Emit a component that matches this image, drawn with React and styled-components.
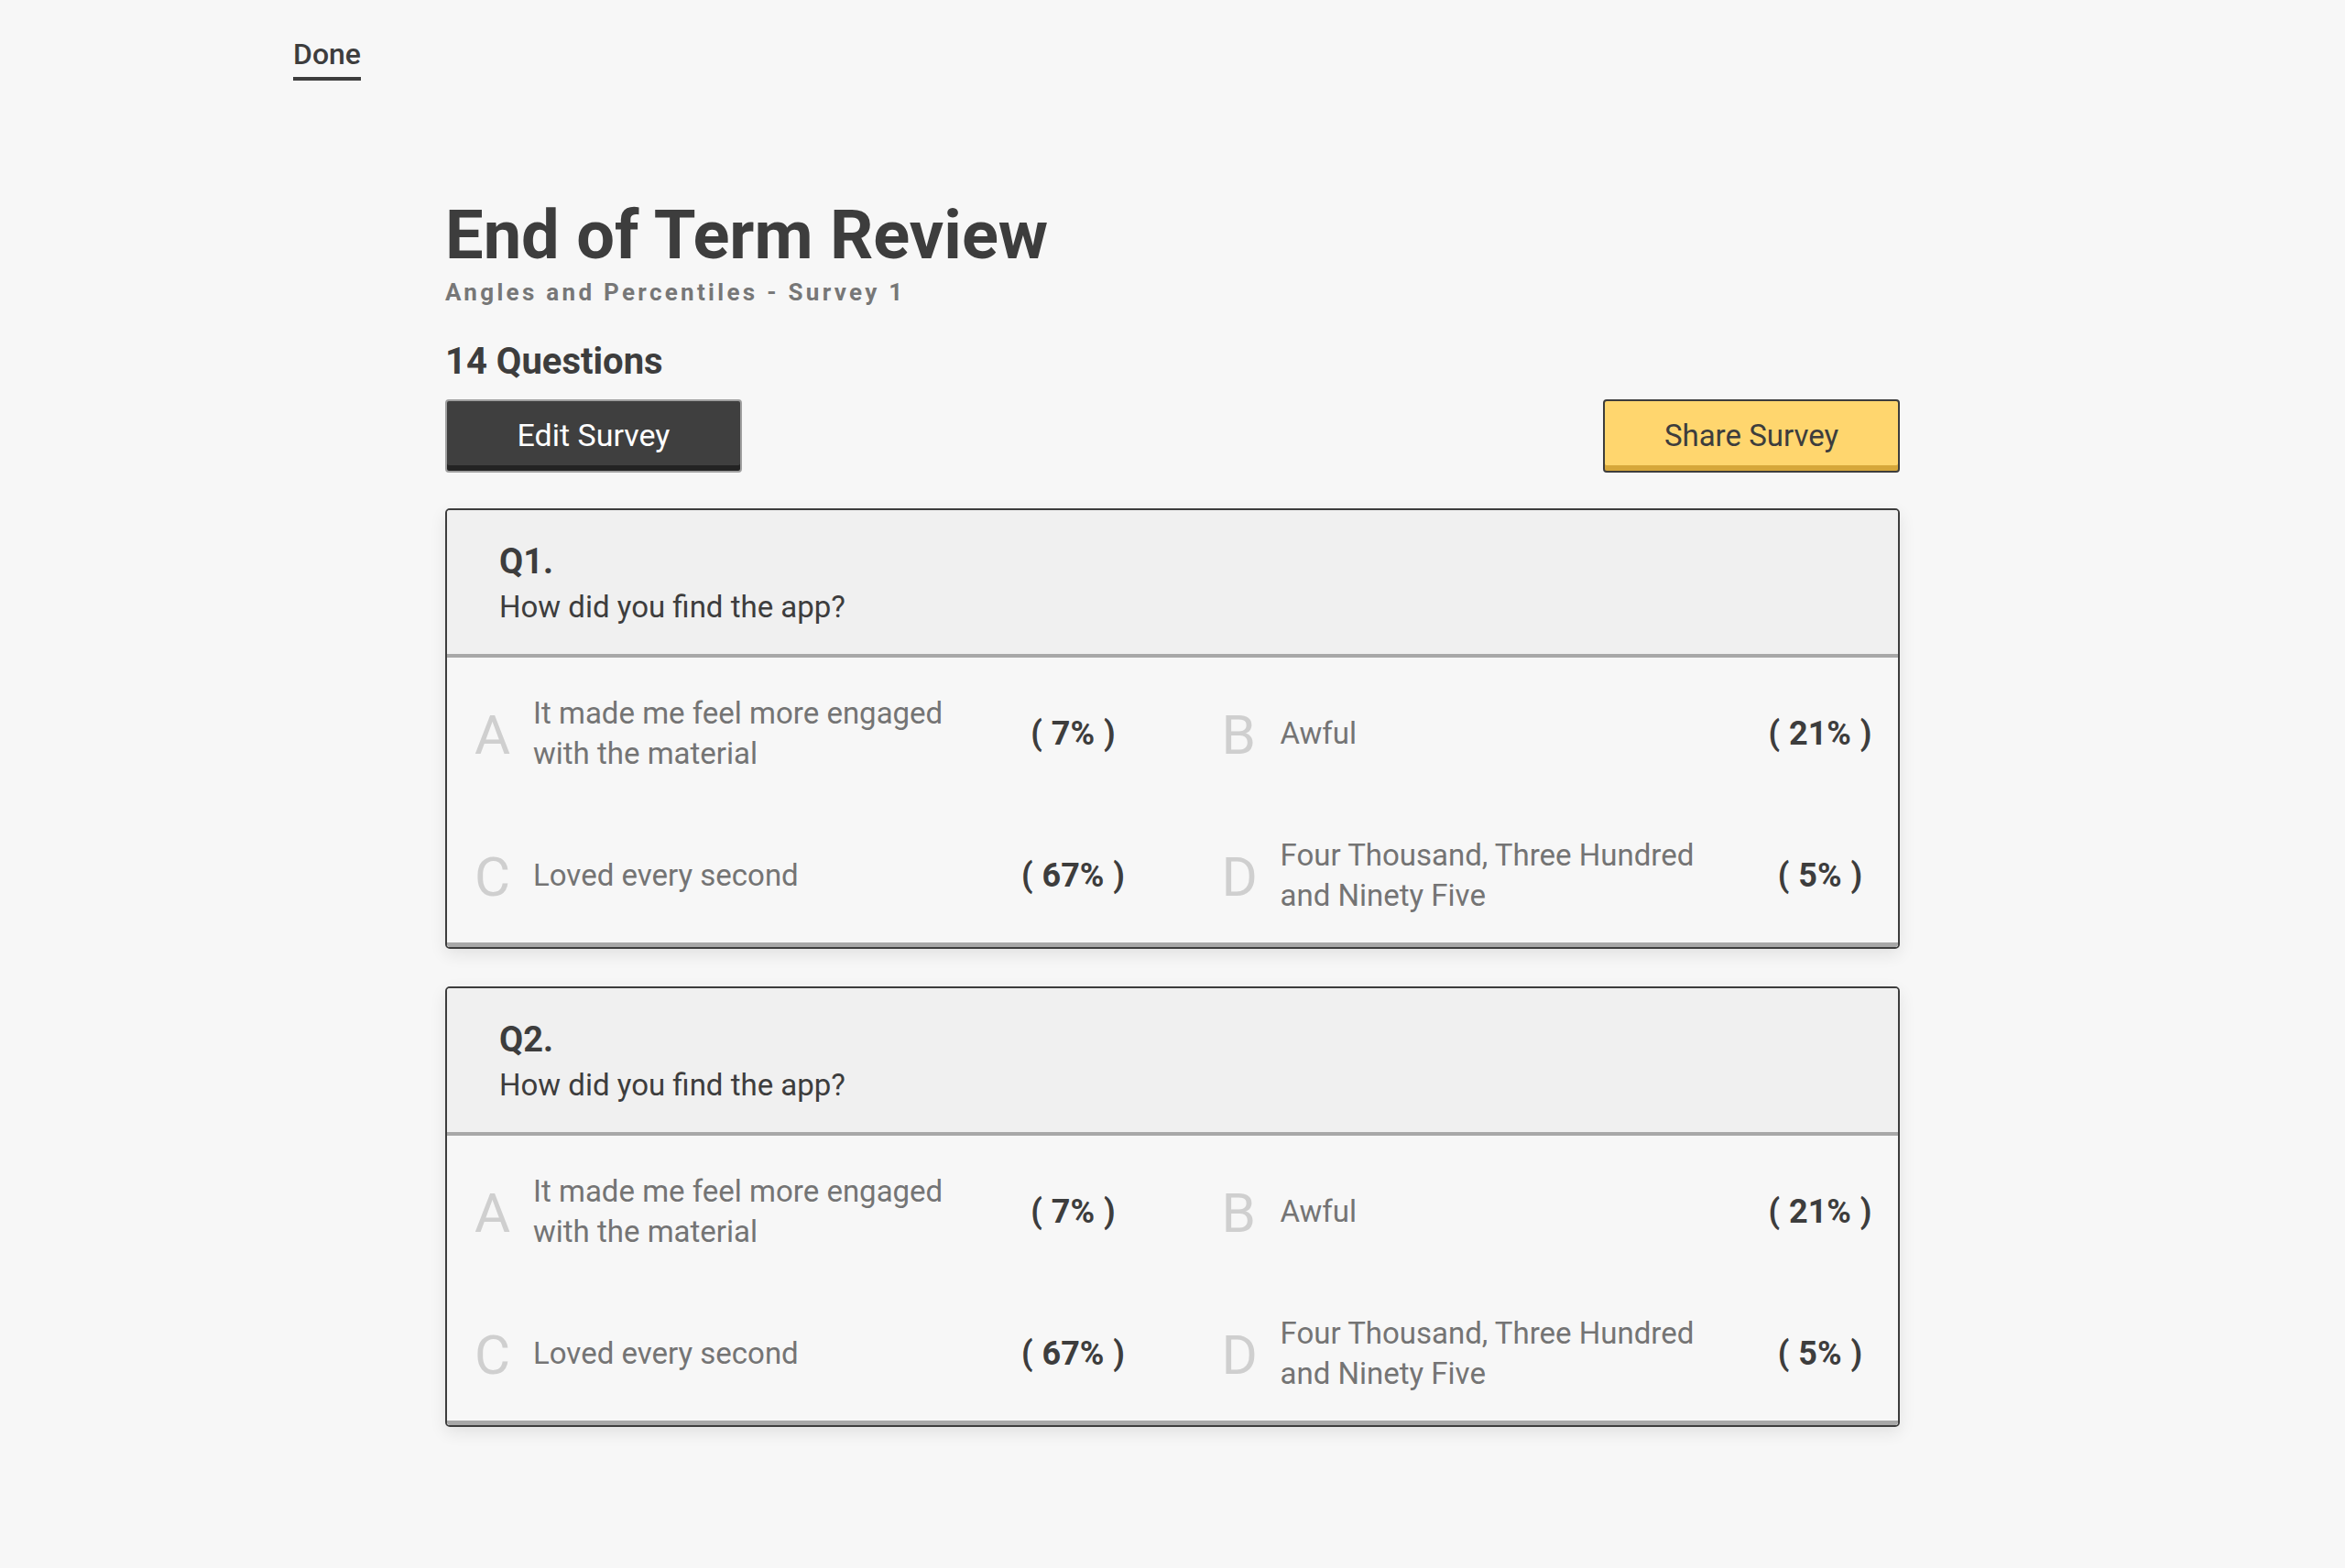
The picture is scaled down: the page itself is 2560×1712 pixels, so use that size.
import React from "react";
import styled, { createGlobalStyle } from "styled-components";

const GlobalStyle = createGlobalStyle`
  body {
    margin: 0;
    background-color: #f7f7f7;
    font-family: Roboto, "Liberation Sans", sans-serif;
    color: #3d3d3d;
  }
`;

const TopBar = styled.div`
  padding: 40px 0 0 320px;
`;

const DoneLink = styled.a`
  display: inline-block;
  font-size: 32px;
  line-height: 38px;
  font-weight: 500;
  color: #3d3d3d;
  text-decoration: none;
  padding-bottom: 6px;
  border-bottom: 4px solid #3d3d3d;
  cursor: pointer;
`;

const Wrapper = styled.div`
  width: 1588px;
  margin: 133px auto 80px;
`;

const Title = styled.h1`
  margin: 0;
  font-size: 74px;
  line-height: 72px;
  font-weight: 700;
  color: #3d3d3d;
`;

const Subtitle = styled.div`
  margin-top: 13px;
  font-size: 26px;
  line-height: 26px;
  font-weight: 700;
  letter-spacing: 3.3px;
  color: #777;
`;

const Count = styled.h2`
  margin: 43px 0 0;
  font-size: 40px;
  line-height: 40px;
  font-weight: 700;
  color: #3d3d3d;
`;

const Toolbar = styled.div`
  margin-top: 21px;
  display: flex;
  justify-content: space-between;
`;

const Button = styled.button`
  width: 324px;
  height: 80px;
  border-radius: 4px;
  font-family: inherit;
  font-size: ${(p) => (p.$primary ? "33px" : "34px")};
  padding: 0 0 2px;
  cursor: pointer;
  border: 2px solid ${(p) => (p.$primary ? "#3d3d3d" : "#a0a0a0")};
  background: ${(p) => (p.$primary ? "#ffd66e" : "#3f3f3f")};
  color: ${(p) => (p.$primary ? "#3d3d3d" : "#fff")};
  box-shadow: inset 0 -6px 0 ${(p) => (p.$primary ? "#d6a73a" : "#232323")};
`;

const Card = styled.section`
  margin-top: ${(p) => (p.$first ? "39px" : "41px")};
  border: 2px solid #3d3d3d;
  border-radius: 5px;
  overflow: hidden;
  box-shadow: 0 6px 18px rgba(0, 0, 0, 0.09);
`;

const CardHeader = styled.div`
  height: 161px;
  box-sizing: border-box;
  padding: 37px 0 0 57px;
  background: #f0f0f0;
  border-bottom: 4px solid #a8a8a8;
`;

const QNumber = styled.div`
  font-size: 38px;
  line-height: 38px;
  font-weight: 700;
  color: #3d3d3d;
`;

const QText = styled.div`
  margin-top: 14px;
  font-size: 33px;
  line-height: 33px;
  color: #3d3d3d;
`;

const CardBody = styled.div`
  display: grid;
  grid-template-columns: 1fr 1fr;
  grid-auto-rows: 149px;
  column-gap: 95px;
  row-gap: 6px;
  padding: 8px 18px 0 30px;
  height: 316px;
  box-sizing: border-box;
  background: #f7f7f7;
  border-bottom: 5px solid #a8a8a8;
`;

const Option = styled.div`
  display: flex;
  align-items: center;
`;

const Letter = styled.div`
  width: 64px;
  flex: none;
  font-size: 60px;
  line-height: 60px;
  color: #cfcfcf;
  padding-top: 4px;
`;

const OptionText = styled.div`
  flex: 1;
  max-width: 475px;
  font-size: 33px;
  line-height: 44px;
  color: #747474;
`;

const Percent = styled.div`
  margin-left: auto;
  width: 134px;
  flex: none;
  text-align: center;
  font-size: 36px;
  font-weight: 700;
  word-spacing: 1px;
  color: #3d3d3d;
  white-space: pre;
`;

const options = [
  { letter: "A", text: "It made me feel more engaged with the material", pct: 7 },
  { letter: "B", text: "Awful", pct: 21 },
  { letter: "C", text: "Loved every second", pct: 67 },
  { letter: "D", text: "Four Thousand, Three Hundred and Ninety Five", pct: 5 },
];

const questions = [
  { n: 1, text: "How did you find the app?" },
  { n: 2, text: "How did you find the app?" },
];

function QuestionCard({ q, first }) {
  return (
    <Card $first={first}>
      <CardHeader>
        <QNumber>Q{q.n}.</QNumber>
        <QText>{q.text}</QText>
      </CardHeader>
      <CardBody>
        {options.map((o) => (
          <Option key={o.letter}>
            <Letter>{o.letter}</Letter>
            <OptionText>{o.text}</OptionText>
            <Percent>{`( ${o.pct}% )`}</Percent>
          </Option>
        ))}
      </CardBody>
    </Card>
  );
}

export default function App() {
  return (
    <>
      <GlobalStyle />
      <TopBar>
        <DoneLink>Done</DoneLink>
      </TopBar>
      <Wrapper>
        <Title>End of Term Review</Title>
        <Subtitle>Angles and Percentiles - Survey 1</Subtitle>
        <Count>14 Questions</Count>
        <Toolbar>
          <Button>Edit Survey</Button>
          <Button $primary>Share Survey</Button>
        </Toolbar>
        {questions.map((q, i) => (
          <QuestionCard key={q.n} q={q} first={i === 0} />
        ))}
      </Wrapper>
    </>
  );
}
